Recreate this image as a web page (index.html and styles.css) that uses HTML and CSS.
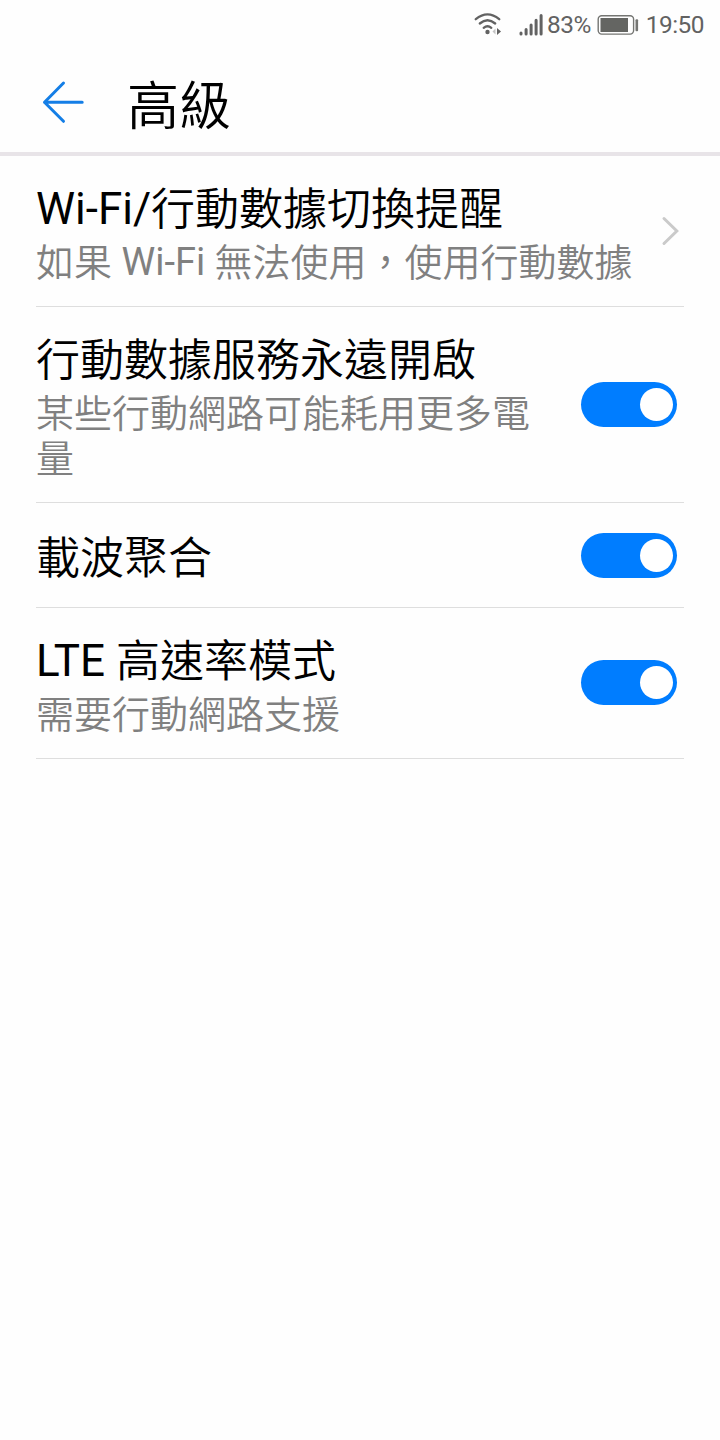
FILE: index.html
```
<!DOCTYPE html>
<html lang="zh-Hant">
<head>
<meta charset="utf-8">
<title>高級</title>
<link rel="stylesheet" href="styles.css">
</head>
<body>
<div class="status">
  <svg class="wifi" width="28" height="26" viewBox="0 0 28 26">
    <g fill="none" stroke="#626262" stroke-width="2.3" stroke-linecap="round">
      <path d="M1.8 7.2Q13.5-2.4 25.2 7.2"/>
      <path d="M5.8 11.5Q13.5 5 21.2 11.5"/>
      <path d="M9.7 15.8Q13.5 12.6 17.3 15.8"/>
    </g>
    <circle cx="13.5" cy="20" r="2.2" fill="#626262"/>
    <path d="M21.5 16.5v6l-3-3z" fill="#c4c4c4"/>
    <path d="M23 16v7l4-3.5z" fill="#626262"/>
  </svg>
  <svg class="signal" width="24" height="24" viewBox="0 0 24 24">
    <g fill="none" stroke="#626262" stroke-width="3" stroke-linecap="round">
      <path d="M2 20.1v.9M7.1 16.5V21M12.1 12V21M17.1 7.2V21M22.1 2.5V21"/>
    </g>
  </svg>
  <span class="percent">83%</span>
  <svg class="battery" width="42" height="22" viewBox="0 0 42 22">
    <rect x="1.2" y="1.7" width="35.4" height="18.4" rx="3.5" fill="none" stroke="#747572" stroke-width="1.4"/>
    <rect x="3.5" y="4" width="27.5" height="14" fill="#646562"/>
    <rect x="38.5" y="5.2" width="2.6" height="12" rx="1" fill="#747572"/>
  </svg>
  <span class="clock">19:50</span>
</div>
<header class="header">
  <svg class="back" width="44" height="44" viewBox="0 0 44 44">
    <path d="M22.5 3L3.5 22.2L22.5 41.3M3.5 22.2H41.2" fill="none" stroke="#147ee6" stroke-width="3" stroke-linecap="round" stroke-linejoin="round"/>
  </svg>
  <h1 class="heading">高級</h1>
</header>
<main class="list">
  <section class="row">
    <div class="text">
      <div class="title"><span class="latin">Wi-Fi/</span>行動數據切換提醒</div>
      <div class="summary">如果<span class="latin"> Wi-Fi </span>無法使用，使用行動數據</div>
    </div>
    <svg class="chevron" width="20" height="32" viewBox="0 0 20 32">
      <path d="M3 3.5L15.8 16L3 28.5" fill="none" stroke="#cacaca" stroke-width="3" stroke-linecap="round"/>
    </svg>
  </section>
  <section class="row">
    <div class="text">
      <div class="title">行動數據服務永遠開啟</div>
      <div class="summary">某些行動網路可能耗用更多電量</div>
    </div>
    <div class="switch"><span class="knob"></span></div>
  </section>
  <section class="row single">
    <div class="text">
      <div class="title">載波聚合</div>
    </div>
    <div class="switch"><span class="knob"></span></div>
  </section>
  <section class="row">
    <div class="text">
      <div class="title"><span class="latin">LTE </span>高速率模式</div>
      <div class="summary">需要行動網路支援</div>
    </div>
    <div class="switch"><span class="knob"></span></div>
  </section>
</main>
</body>
</html>
```
FILE: styles.css
```
* { box-sizing: border-box; }
body {
  margin: 0;
  min-height: 1440px;
  background: #fefefe;
  color: #000;
  font-family: Roboto, "Noto Sans CJK TC", sans-serif;
}
.status {
  display: flex;
  align-items: center;
  height: 50px;
  padding-right: 16px;
  justify-content: flex-end;
  color: #626262;
  font-size: 24.4px;
  letter-spacing: -0.5px;
  line-height: 52px;
}
.wifi { margin-right: 17px; }
.signal { margin-right: 4px; }
.percent { margin-right: 6px; }
.battery { margin-right: 7px; }
.header {
  display: flex;
  align-items: center;
  height: 106px;
  padding: 2px 41px 0;
  border-bottom: 4px solid #e8e4e8;
}
.heading {
  margin: 12px 0 0 42px;
  font-size: 52px;
  font-weight: 350;
  line-height: 72px;
}
.list { padding: 0 36px; }
.row {
  display: flex;
  align-items: center;
  justify-content: space-between;
  padding: 25px 7px 19px 0;
  border-bottom: 1px solid #dedede;
}
.row.single {
  height: 105px;
  padding-top: 26px;
  padding-bottom: 18px;
}
.text { flex: 0 1 auto; min-width: 0; font-weight: 350; }
.latin {
  font-weight: 400;
  line-height: 1;
  vertical-align: 1px;
}
.title {
  font-size: 44px;
  line-height: 58px;
  white-space: nowrap;
}
.summary {
  margin-top: 2px;
  padding-bottom: 1px;
  color: #808080;
  font-size: 38px;
  line-height: 45px;
}
.chevron { flex: none; margin: 0 -4px 7px 0; }
.switch {
  display: flex;
  flex: none;
  align-items: center;
  justify-content: flex-end;
  width: 96px;
  height: 45px;
  margin: 0 0 7px 45px;
  padding-right: 4px;
  border-radius: 23px;
  background: #007dff;
}
.knob {
  width: 33px;
  height: 33px;
  border-radius: 50%;
  background: #fff;
}
```
